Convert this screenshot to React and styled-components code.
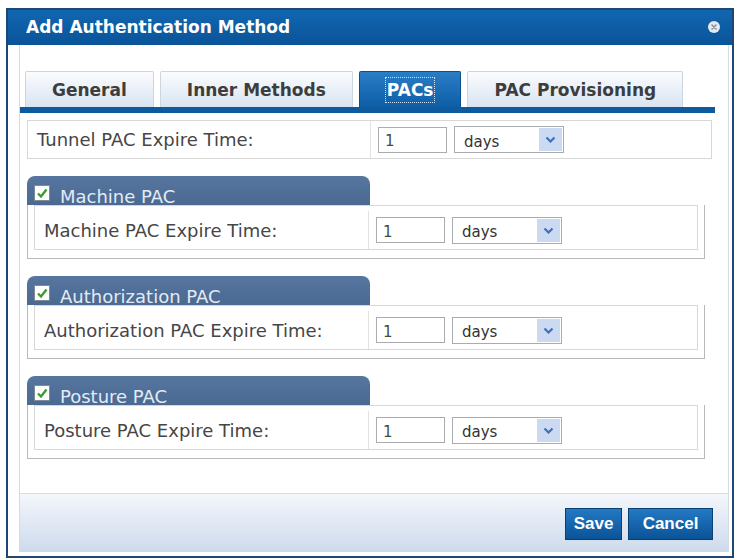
import styled, { createGlobalStyle } from "styled-components";

const GlobalStyle = createGlobalStyle`
    body {
        margin: 0;
        background: #fff;
        font-family: "DejaVu Sans", Verdana, sans-serif;
    }
`;

const tabs = ['General', 'Inner Methods', 'PACs', 'PAC Provisioning'];
const groups = ['Machine PAC', 'Authorization PAC', 'Posture PAC'];

const CloseIcon = () => (
    <svg width="14" height="14" viewBox="0 0 14 14">
        <circle cx="7" cy="7" r="6" fill="#e4eaf1" />
        <path d="M5 5 L9 9 M9 5 L5 9" stroke="#8b8f95" strokeWidth="1.6" strokeLinecap="round" />
    </svg>
);

const Chevron = () => (
    <svg width="11" height="7" viewBox="0 0 11 7">
        <path d="M1.5 1.5 L5.5 5.5 L9.5 1.5" stroke="#3f70c0" strokeWidth="2.2" fill="none" />
    </svg>
);

const Check = () => (
    <svg width="12" height="12" viewBox="0 0 12 12">
        <path d="M2 6.5 L5 9.5 L10.5 2.5" stroke="#3d9b2c" strokeWidth="2.4" fill="none" />
    </svg>
);

const ExpireRow = ({ label, labelWidth, inGroup }) => (
    <Row $inGroup={inGroup}>
        <LabelCell $width={labelWidth}>{label}</LabelCell>
        <ValueCell>
            <NumberInput readOnly value="1" />
            <Select>
                <SelectText>days</SelectText>
                <Arrow><Chevron /></Arrow>
            </Select>
        </ValueCell>
    </Row>
);

const App = () => {
    return (
        <>
            <GlobalStyle />
            <Dialog>
                <TitleBar>
                    <Title>Add Authentication Method</Title>
                    <CloseIcon />
                </TitleBar>
                <Body>
                    <Panel>
                        <Content>
                            <TabStrip>
                                {tabs.map(t => (
                                    <Tab key={t} $active={t === 'PACs'}>
                                        {t === 'PACs' ? <Focus>{t}</Focus> : t}
                                    </Tab>
                                ))}
                            </TabStrip>
                            <Sections>
                                <ExpireRow label="Tunnel PAC Expire Time:" labelWidth={343} />
                                {groups.map(g => (
                                    <Group key={g}>
                                        <GroupHeader>
                                            <CheckBox><Check /></CheckBox>
                                            <span>{g}</span>
                                        </GroupHeader>
                                        <GroupBox>
                                            <ExpireRow label={`${g} Expire Time:`} labelWidth={334} inGroup />
                                        </GroupBox>
                                    </Group>
                                ))}
                            </Sections>
                        </Content>
                        <Footer>
                            <Button $width={57}>Save</Button>
                            <Button $width={85}>Cancel</Button>
                        </Footer>
                    </Panel>
                </Body>
            </Dialog>
        </>
    )
}

const Dialog = styled.div`
    box-sizing: border-box;
    margin: 8px 0 0 6px;
    width: 728px;
    height: 550px;
    border: 2px solid #1f4775;
    display: flex;
    flex-direction: column;
    background: #fff;
`;

const TitleBar = styled.div`
    height: 35px;
    flex-shrink: 0;
    display: flex;
    align-items: center;
    justify-content: space-between;
    padding: 0 11px 2px 18px;
    box-sizing: border-box;
    background: linear-gradient(#1166b0, #0a5499);
`;

const Title = styled.div`
    color: #fff;
    font-weight: bold;
    font-size: 17px;
`;

const Body = styled.div`
    flex: 1;
    display: flex;
    padding: 0 3px 4px 11px;
    min-height: 0;
`;

const Panel = styled.div`
    flex: 1;
    display: flex;
    flex-direction: column;
    border-left: 1px solid #d5dbe3;
    border-right: 1px solid #d5dbe3;
`;

const Content = styled.div`
    flex: 1;
    padding-top: 26px;
`;

const TabStrip = styled.div`
    display: flex;
    gap: 6px;
    padding-left: 5px;
    margin-right: 13px;
    border-bottom: 6px solid #0d5a9e;
`;

const Tab = styled.div`
    height: 36px;
    padding: 0 26px;
    display: flex;
    align-items: center;
    font-size: 17px;
    font-weight: bold;
    border: 1px solid ${({ $active }) => $active ? '#0c4f8f' : '#ccd6e1'};
    border-bottom: none;
    border-radius: 2px 2px 0 0;
    color: ${({ $active }) => $active ? '#fff' : '#3d3d3d'};
    background: ${({ $active }) => $active
        ? 'linear-gradient(#2a7dc5, #0d5ea7)'
        : 'linear-gradient(#fbfcfe, #d8e4f1)'};
    box-sizing: border-box;
`;

const Focus = styled.span`
    outline: 1px dotted #cfe0f5;
    padding: 2px 1px;
`;

const Sections = styled.div`
    display: flex;
    flex-direction: column;
    gap: 17px;
    padding: 7px 16px 0 7px;
`;

const Row = styled.div`
    display: flex;
    height: ${({ $inGroup }) => $inGroup ? '45px' : '39px'};
    border: 1px solid #d7d7d7;
    box-sizing: border-box;
    align-items: stretch;
    padding-top: ${({ $inGroup }) => $inGroup ? '5px' : '0'};
    background: #fff;
`;

const LabelCell = styled.div`
    width: ${({ $width }) => $width}px;
    flex-shrink: 0;
    display: flex;
    align-items: center;
    padding-left: 9px;
    box-sizing: border-box;
    border-right: 1px solid #e2e2e2;
    font-size: 18px;
    color: #464646;
`;

const ValueCell = styled.div`
    display: flex;
    align-items: center;
    gap: 7px;
    padding-left: 7px;
`;

const NumberInput = styled.input`
    width: 69px;
    height: 26px;
    box-sizing: border-box;
    border: 1px solid #a9acae;
    padding: 3px 0 0 6px;
    font-family: "DejaVu Sans", sans-serif;
    font-size: 15px;
    color: #3f503f;
    outline: none;
`;

const Select = styled.div`
    width: 110px;
    height: 27px;
    box-sizing: border-box;
    border: 1px solid #a9acae;
    display: flex;
    align-items: center;
    justify-content: space-between;
    padding: 1px 1px 1px 9px;
    font-size: 15px;
    color: #333;
`;

const SelectText = styled.span`
    padding-top: 4px;
`;

const Arrow = styled.div`
    width: 23px;
    height: 100%;
    background: #cbd9f1;
    display: flex;
    align-items: center;
    justify-content: center;
`;

const Group = styled.div`
    display: flex;
    flex-direction: column;
    margin-right: 7px;
`;

const GroupHeader = styled.div`
    width: 343px;
    height: 29px;
    box-sizing: border-box;
    border-radius: 8px 8px 0 0;
    background: linear-gradient(#5676a0, #4b6991);
    display: flex;
    align-items: flex-end;
    gap: 10px;
    padding-left: 7px;
    font-size: 18px;
    line-height: 16px;
    color: #e2ebf5;
`;

const CheckBox = styled.div`
    width: 16px;
    height: 16px;
    box-sizing: border-box;
    margin-bottom: 4px;
    background: #fff;
    border: 1px solid #7d8a98;
    display: flex;
    align-items: center;
    justify-content: center;
`;

const GroupBox = styled.div`
    border: 1px solid #b9b9b9;
    border-top: none;
    padding: 0 6px 8px;
`;

const Footer = styled.div`
    height: 59px;
    flex-shrink: 0;
    box-sizing: border-box;
    border-top: 1px solid #d8dde5;
    background: linear-gradient(#f4f7fb, #cddaec);
    display: flex;
    justify-content: flex-end;
    align-items: flex-end;
    gap: 6px;
    padding: 0 15px 12px 0;
`;

const Button = styled.button`
    width: ${({ $width }) => $width}px;
    height: 32px;
    border: 1px solid #0a3f73;
    background: linear-gradient(#2379c3, #0b5397);
    color: #fff;
    font-family: "Liberation Sans", Arial, sans-serif;
    font-weight: bold;
    font-size: 17px;
    padding: 0;
    cursor: pointer;
`;

export default App
